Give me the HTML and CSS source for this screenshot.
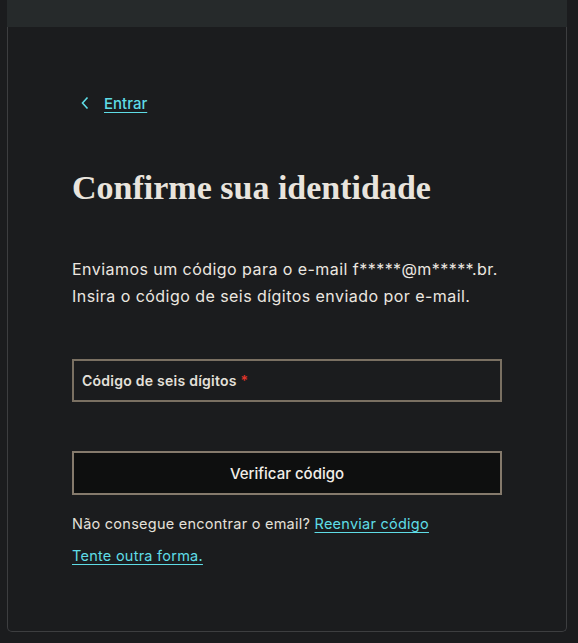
FILE: index.html
```html
<!DOCTYPE html>
<html lang="pt-BR">
<head>
<meta charset="utf-8">
<link rel="stylesheet" href="styles.css">
</head>
<body>
<div class="card">
  <div class="card-top"></div>
  <div class="card-body">
    <a class="back" href="#">
      <svg class="chev" width="10" height="14" viewBox="0 0 10 14"><path d="M7.5 1.5 L2.5 7 L7.5 12.5" fill="none" stroke="currentColor" stroke-width="1.6"/></svg>
      <span class="back-text">Entrar</span>
    </a>
    <h1 class="title">Confirme sua identidade</h1>
    <p class="desc">Enviamos um código para o e-mail f*****@m*****.br.<br>Insira o código de seis dígitos enviado por e-mail.</p>
    <label class="field">
      <span class="field-label">Código de seis dígitos <span class="req">*</span></span>
    </label>
    <button class="btn">Verificar código</button>
    <p class="help">Não consegue encontrar o email? <a href="#" class="link">Reenviar código</a></p>
    <p class="help2"><a href="#" class="link">Tente outra forma.</a></p>
  </div>
</div>
</body>
</html>
```
FILE: styles.css
```css
html, body {
  margin: 0;
  padding: 0;
  background: #1b1c1e;
  font-family: Inter, "Noto Sans", sans-serif;
}
.card {
  margin: 0 11px 0 7px;
  height: 632px;
  box-sizing: border-box;
  display: flex;
  flex-direction: column;
}
.card-top {
  height: 27px;
  background: #262a2b;
  flex: none;
}
.card-body {
  flex: 1;
  border: 1px solid #3d3e40;
  border-top: none;
  border-radius: 0 0 5px 5px;
  padding: 0 0 0 64px;
  display: flex;
  flex-direction: column;
  align-items: flex-start;
}
.back {
  margin-top: 66px;
  display: flex;
  align-items: center;
  gap: 14px;
  color: #5fdce6;
  text-decoration: none;
  font-size: 15px;
  height: 20px;
}
.chev { margin-left: 8px; }
.back-text {
  text-decoration: underline;
  text-underline-offset: 3px;
  font-weight: 500;
}
.title {
  margin: 55px 0 0;
  font-family: "Liberation Serif", serif;
  font-weight: bold;
  font-size: 34px;
  line-height: 40px;
  color: #e9e4dd;
}
.desc {
  margin: 48px 0 0;
  font-size: 16px;
  line-height: 27px;
  letter-spacing: 0.45px;
  color: #ece7e0;
}
.field {
  margin-top: 49px;
  width: 430px;
  height: 43px;
  box-sizing: border-box;
  border: 2px solid #7a7062;
  display: flex;
  align-items: center;
  padding-left: 8px;
}
.field-label {
  font-size: 14px;
  font-weight: 600;
  letter-spacing: 0.25px;
  color: #e4e0da;
}
.req { color: #e0342a; }
.btn {
  margin-top: 49px;
  width: 430px;
  height: 44px;
  box-sizing: border-box;
  border: 2px solid #857a6c;
  background: #0e0f0f;
  color: #f2eee8;
  font-family: inherit;
  font-size: 15px;
  font-weight: 500;
}
.help {
  margin: 19px 0 0;
  font-size: 14.5px;
  line-height: 20px;
  letter-spacing: 0.25px;
  color: #e4e0da;
}
.help2 {
  margin: 12px 0 0;
  font-size: 14.5px;
  line-height: 20px;
  letter-spacing: 0.25px;
}
.link {
  color: #5fdce6;
  text-underline-offset: 3px;
}
```
